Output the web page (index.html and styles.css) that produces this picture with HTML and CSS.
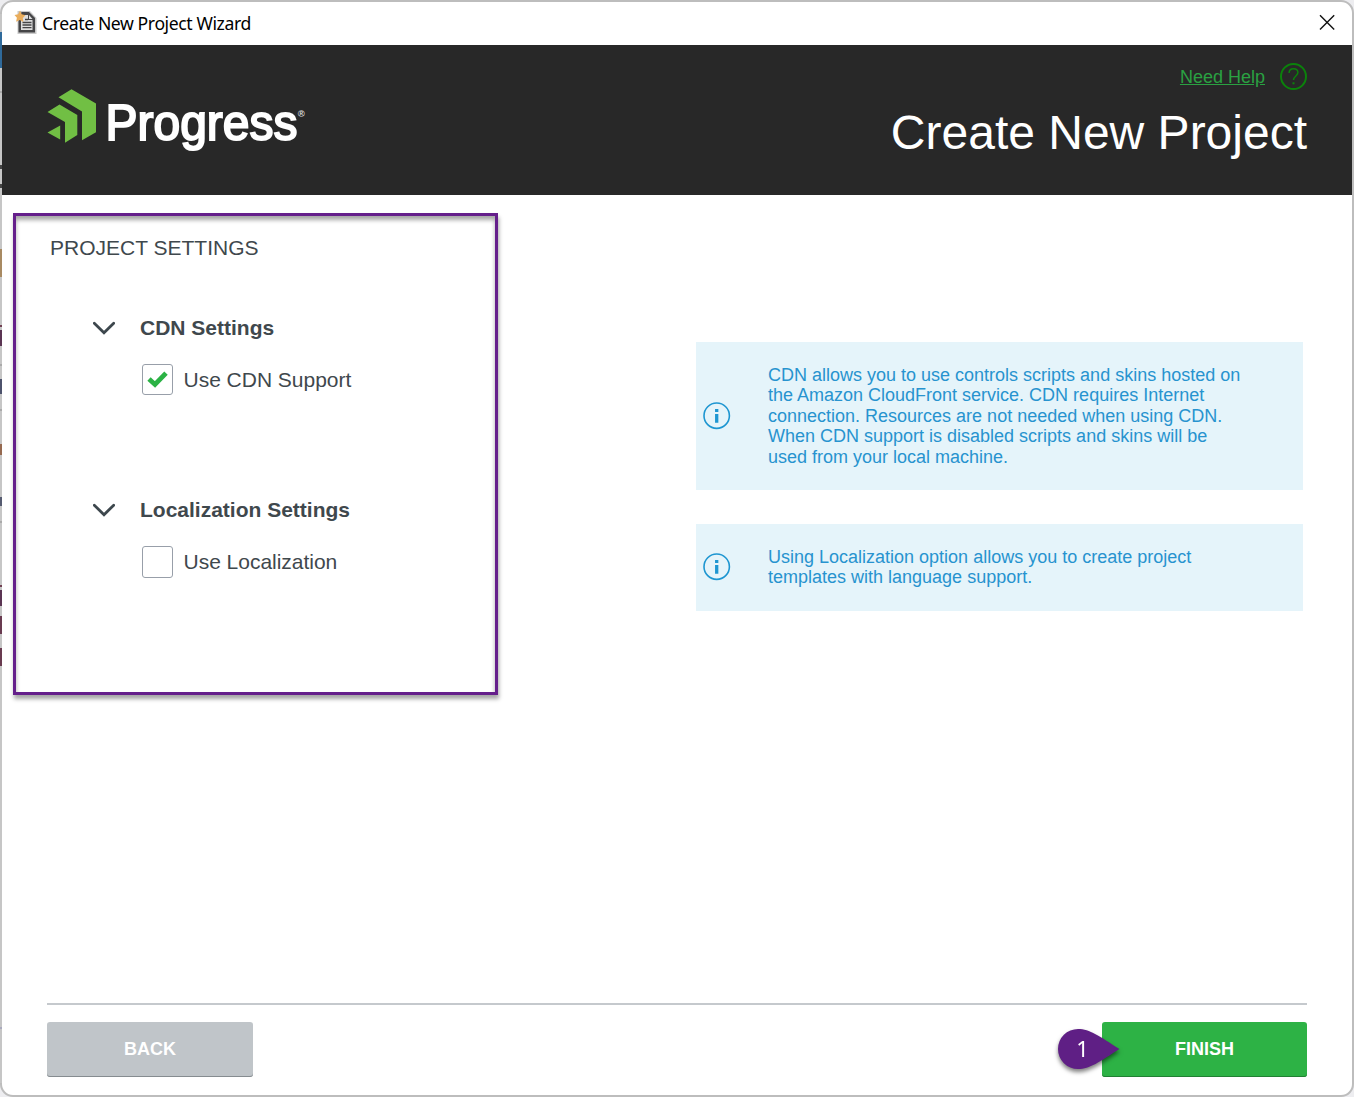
FILE: index.html
```html
<!DOCTYPE html>
<html lang="en">
<head>
<meta charset="utf-8">
<title>Create New Project Wizard</title>
<link rel="stylesheet" href="styles.css">
</head>
<body>
<div class="window">
  <div class="titlebar">
    <svg class="app-icon" width="22" height="24" viewBox="0 0 22 24">
      <path d="M2.500 1H15L21.500 8V24H2.500Z" fill="#c9c9c9"/>
      <path d="M6.500 2H14L20 8V22.500H3.500V11" fill="#454547"/>
      <path d="M7 5H13V10H17.500V20H6V10Z" fill="#dedede"/>
      <path d="M14 5L17.500 9H14Z" fill="#dedede"/>
      <path d="M10 9.500H13M7.500 12.500H16.500M7.500 15H16.500M7.500 17.600H16.500" stroke="#454547" stroke-width="1.300"/>
      <path d="M5 .5L6.700 4.300L10.500 5.200L7.800 8L8.300 12L4.800 10L1.100 11.800L1.900 7.800L-.5 5L3.200 4.300Z" fill="#e9ad5c"/>
    </svg>
    <span class="titlebar-text">Create New Project Wizard</span>
    <svg class="close" width="16" height="16" viewBox="0 0 16 16"><path d="M1 1.200L15.200 15.400M15.200 1.200L1 15.400" stroke="#111" stroke-width="1.400" fill="none"/></svg>
  </div>
  <header class="banner">
    <svg class="logo" width="260" height="66" viewBox="0 0 260 66">
      <g fill="#71bf44">
        <path d="M11.500 8.200L24.500 .3L49 14.500V43.300L35 51.200V22.500Z"/>
        <path d="M.5 23L12.500 15.500L30.300 26V46L18 53.800V33Z"/>
        <path d="M.5 43.500L13.200 36.500V50.500Z"/>
      </g>
      <text class="logo-name" x="58.500" y="51" textLength="192" lengthAdjust="spacingAndGlyphs">Progress</text>
      <text class="logo-mark" x="250.800" y="27.500">®</text>
    </svg>
    <div class="banner-side">
      <div class="help">
        <a class="help-link">Need Help</a>
        <svg width="28" height="28" viewBox="0 0 28 28" fill="none" stroke="#0b820b">
          <circle cx="14.500" cy="13.500" r="12.500" stroke-width="2"/>
          <path d="M10.100 10.100C10.100 7.300 11.800 5.800 14.500 5.800C17.200 5.800 18.900 7.400 18.900 9.600C18.900 13 14.500 13 14.500 17.100" stroke-width="1.500"/>
          <path d="M14.500 19.300V21.300" stroke-width="2"/>
        </svg>
      </div>
      <h1 class="heading">Create New Project</h1>
    </div>
  </header>
  <main class="content">
    <section class="settings">
      <h2 class="settings-title">PROJECT SETTINGS</h2>
      <div class="group">
        <div class="group-head">
          <svg width="22" height="14" viewBox="0 0 22 14"><path d="M1.300 2.200L11 11.700L20.700 2.200" fill="none" stroke="#3d474d" stroke-width="2.800" stroke-linecap="round"/></svg>
          <span>CDN Settings</span>
        </div>
        <div class="option">
          <span class="checkbox"><svg width="21" height="17" viewBox="0 0 21 17"><path d="M2 8L8 13.500L19 2.200" fill="none" stroke="#2bb245" stroke-width="4.800"/></svg></span>
          <span>Use CDN Support</span>
        </div>
      </div>
      <div class="group">
        <div class="group-head">
          <svg width="22" height="14" viewBox="0 0 22 14"><path d="M1.300 2.200L11 11.700L20.700 2.200" fill="none" stroke="#3d474d" stroke-width="2.800" stroke-linecap="round"/></svg>
          <span>Localization Settings</span>
        </div>
        <div class="option">
          <span class="checkbox checkbox-empty"></span>
          <span>Use Localization</span>
        </div>
      </div>
    </section>
    <aside class="notes">
      <div class="note">
        <svg width="28" height="28" viewBox="0 0 28 28"><circle cx="13.700" cy="13.700" r="12.700" fill="none" stroke="#1e96d1" stroke-width="1.600"/><path d="M13.700 7V10M13.700 12V20.700" stroke="#1e96d1" stroke-width="3.300"/></svg>
        <p>CDN allows you to use controls scripts and skins hosted on<br>the Amazon CloudFront service. CDN requires Internet<br>connection. Resources are not needed when using CDN.<br>When CDN support is disabled scripts and skins will be<br>used from your local machine.</p>
      </div>
      <div class="note">
        <svg width="28" height="28" viewBox="0 0 28 28"><circle cx="13.700" cy="13.700" r="12.700" fill="none" stroke="#1e96d1" stroke-width="1.600"/><path d="M13.700 7V10M13.700 12V20.700" stroke="#1e96d1" stroke-width="3.300"/></svg>
        <p>Using Localization option allows you to create project<br>templates with language support.</p>
      </div>
    </aside>
  </main>
  <footer class="actions">
    <button class="btn btn-back">BACK</button>
    <div class="finish">
      <button class="btn btn-finish">FINISH</button>
      <svg class="callout" width="80" height="60" viewBox="0 0 80 60">
        <path d="M28 7C40 7 49 14 69.500 27C49 40 40 47 28 47A20 20 0 0 1 28 7Z" fill="#5f1f85"/>
        <text class="callout-number" x="32.500" y="34.500">1</text>
      </svg>
    </div>
  </footer>
</div>
</body>
</html>
```

FILE: styles.css
```css
* { box-sizing: border-box; }

body {
  margin: 0;
  height: 1097px;
  overflow: hidden;
  background: #ededf0;
  font-family: "Liberation Sans", Arial, sans-serif;
  color: #3f484d;
}

.window {
  position: relative;
  display: flex;
  flex-direction: column;
  height: 1097px;
  border: 2px solid #bdbdbd;
  border-radius: 13px;
  background: #fff;
}

/* slivers of the application behind the dialog */
.window::before {
  content: "";
  position: absolute;
  left: -2px;
  top: 12px;
  width: 2px;
  height: 1069px;
  background: linear-gradient(#c6c6c6 18px, #2f6a9b 18px 54px, #c6c6c6 54px 77px, #aaa 77px 79px, #c6c6c6 79px 151px, #444 151px 155px, #c6c6c6 155px 170px, #444 170px 174px, #c6c6c6 174px 235px, #a88a62 235px 263px, #c6c6c6 263px 311px, #714052 311px 313px, #c6c6c6 313px 316px, #5b3553 316px 332px, #c6c6c6 332px 350px, #aaa 350px 352px, #c6c6c6 352px 365px, #4d526c 365px 380px, #c6c6c6 380px 395px, #aaa 395px 397px, #c6c6c6 397px 430px, #956950 430px 441px, #c6c6c6 441px 483px, #555b70 483px 492px, #c6c6c6 492px 507px, #aaa 507px 509px, #c6c6c6 509px 571px, #714052 571px 573px, #c6c6c6 573px 576px, #5b3553 576px 592px, #c6c6c6 592px 602px, #693b50 602px 620px, #c6c6c6 620px 634px, #693b50 634px 652px, #c6c6c6 652px 1013px, #aaaabd 1013px 1015px, #c6c6c6 1015px);
}

.titlebar {
  display: flex;
  align-items: center;
  height: 43px;
  padding: 0 17px 0 13px;
}

.app-icon {
  margin-bottom: 3px;
  overflow: visible;
}

.titlebar-text {
  margin: 0 0 1px 5px;
  color: #000;
  font: 17.6px/24px "Noto Sans", sans-serif;
  letter-spacing: -.4px;
}

.close { margin: 0 0 3px auto; }

.banner {
  display: flex;
  justify-content: space-between;
  height: 150px;
  padding: 18px 45px 0;
  background: #282828;
}

.logo {
  margin-top: 26px;
  overflow: visible;
}

.logo-name {
  fill: #fff;
  stroke: #fff;
  stroke-width: 2px;
  font: 50px "Liberation Sans", Arial, sans-serif;
}

.logo-mark {
  fill: #ddd;
  font: bold 9.5px "Liberation Sans", Arial, sans-serif;
}

.banner-side {
  display: flex;
  flex-direction: column;
  align-items: flex-end;
}

.help {
  display: flex;
  align-items: center;
  gap: 14px;
}

.help svg { overflow: visible; }

.help-link {
  color: #2aa142;
  font-size: 18px;
  text-decoration: underline;
}

.heading {
  margin: 15px 0 0;
  color: #fff;
  font-size: 48px;
  font-weight: 400;
  line-height: 54px;
  white-space: nowrap;
}

.content {
  display: flex;
  justify-content: space-between;
  align-items: flex-start;
  height: 808px;
  padding: 18px 49px 0 11px;
}

.settings {
  width: 485px;
  height: 482px;
  padding: 20px 34px 0;
  border: 3px solid #651f8b;
  box-shadow: 1px 4px 4px rgba(0, 0, 0, .35), inset 0 4px 4px rgba(0, 0, 0, .35);
  font-size: 21px;
}

.settings-title {
  margin: 0 0 55px;
  font-size: 21px;
  font-weight: 400;
  line-height: 24px;
}

.group {
  height: 182px;
  padding-left: 43px;
}

.group-head {
  display: flex;
  align-items: center;
  gap: 25px;
  height: 26px;
  font-weight: 700;
}

.option {
  display: flex;
  align-items: center;
  gap: 10.5px;
  height: 32px;
  margin: 23px 0 0 49px;
  letter-spacing: -.02px;
}

.checkbox {
  display: flex;
  align-items: center;
  justify-content: center;
  width: 31px;
  height: 31px;
  margin-bottom: 1px;
  border: 1.5px solid #989fa9;
  border-radius: 3px;
}

.checkbox-empty {
  height: 32px;
  margin-bottom: 0;
}

.notes {
  display: flex;
  flex-direction: column;
  gap: 34px;
  width: 607px;
  margin-top: 129px;
}

.note {
  display: flex;
  align-items: center;
  gap: 37px;
  padding: 22.5px 7px;
  background: #e5f4fa;
  color: #2793cf;
  font-size: 18px;
  line-height: 20.65px;
}

.note p {
  margin: 0;
  white-space: nowrap;
}

.actions {
  display: flex;
  justify-content: space-between;
  margin: 0 45px;
  padding-top: 17px;
  border-top: 2px solid #c5c9cd;
}

.finish { position: relative; }

.btn {
  display: block;
  width: 206px;
  height: 55px;
  padding: 0;
  border: 0;
  border-radius: 3px;
  color: #fff;
  font: bold 18px "Liberation Sans", Arial, sans-serif;
}

.btn-back {
  background: #c0c5c9;
  box-shadow: inset 0 -1px #868c90;
}

.btn-finish {
  width: 205px;
  background: #2db245;
  box-shadow: inset 0 -1px #218033;
}

.callout {
  position: absolute;
  left: -52px;
  top: 0;
  filter: drop-shadow(0 3px 2px rgba(0, 0, 0, .5));
}

.callout-number {
  fill: #fff;
  font: 22px "Noto Sans", sans-serif;
  text-anchor: middle;
}
```
